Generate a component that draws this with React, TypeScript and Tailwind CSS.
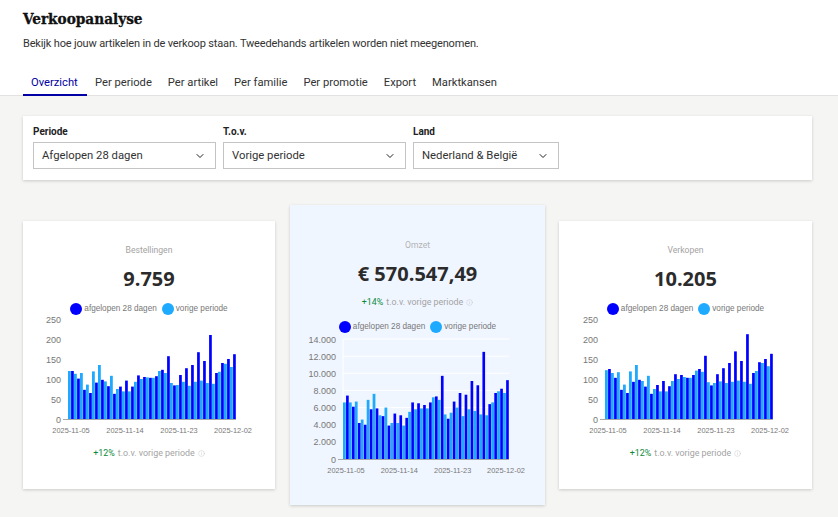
import { ChevronDown, Info } from 'lucide-react';

const tabs = ['Overzicht', 'Per periode', 'Per artikel', 'Per familie', 'Per promotie', 'Export', 'Marktkansen'];

const bestellingen = {
  cur: [120, 101, 73, 65, 91, 98, 82, 63, 81, 96, 81, 109, 105, 103, 107, 123, 157, 84, 110, 127, 135, 167, 145, 210, 115, 140, 150, 162],
  prev: [120, 113, 115, 86, 119, 135, 94, 108, 75, 69, 69, 93, 100, 104, 103, 120, 115, 90, 85, 93, 83, 93, 96, 90, 88, 118, 138, 130],
};
const omzet = {
  cur: [7400, 6100, 4200, 4000, 5800, 5900, 5000, 3900, 5300, 5100, 4800, 6600, 6500, 6300, 6600, 7300, 9700, 4700, 6700, 7700, 7500, 9100, 8600, 12500, 6400, 7700, 8200, 9200],
  prev: [6600, 6600, 6700, 4600, 6900, 7600, 5100, 6000, 4200, 4200, 3900, 5500, 5800, 5900, 5900, 7200, 6900, 5200, 5400, 6000, 5000, 5800, 5600, 5200, 5100, 6600, 7900, 7700],
};
const verkopen = {
  cur: [125, 103, 73, 65, 93, 98, 81, 63, 85, 95, 82, 112, 110, 103, 110, 125, 158, 84, 112, 127, 140, 169, 145, 212, 115, 142, 150, 163],
  prev: [122, 115, 117, 86, 119, 135, 95, 108, 75, 69, 69, 95, 100, 105, 103, 121, 118, 92, 90, 94, 90, 93, 96, 93, 88, 120, 140, 132],
};

const dates = ['2025-11-05', '2025-11-14', '2025-11-23', '2025-12-02'];

type ChartProps = {
  data: { cur: number[]; prev: number[] };
  ticks: { value: number; label: string }[];
  max: number;
  top: number;
  plotLeft: number;
  plotWidth: number;
  width: number;
  plotHeight: number;
  grid?: boolean;
};

function BarChart({ data, ticks, max, top, plotLeft, plotWidth, width, plotHeight, grid }: ChartProps) {
  const base = top + plotHeight;
  const step = plotWidth / 28;
  const y = (v: number) => base - (v / max) * plotHeight;
  return (
    <svg width={width} height={base + 22} className="block" style={{ fontFamily: '"Liberation Sans", Arial, sans-serif' }}>
      {grid &&
        ticks.map((t) => <line key={t.value} x1={plotLeft} x2={plotLeft + plotWidth} y1={y(t.value)} y2={y(t.value)} stroke="#ffffff" />)}
      {grid && <line x1={plotLeft} x2={plotLeft} y1={top} y2={base} stroke="#ffffff" />}
      {ticks.map((t) => (
        <text key={t.value} x={plotLeft - 7} y={y(t.value) + 3.5} textAnchor="end" fontSize="9" fill="#777777">
          {t.label}
        </text>
      ))}
      {data.prev.map((v, i) => (
        <rect key={i} x={plotLeft + i * step} y={y(v)} width={step / 2 - 0.2} height={base - y(v)} fill="#1eaaff" />
      ))}
      {data.cur.map((v, i) => (
        <rect key={i} x={plotLeft + i * step + step / 2 + 0.1} y={y(v)} width={step / 2 - 0.3} height={base - y(v)} fill="#0000ff" />
      ))}
      <line x1={plotLeft - 5} x2={plotLeft + plotWidth} y1={base + 0.5} y2={base + 0.5} stroke="#a8a8a8" />
      {dates.map((d, i) => (
        <text key={d} x={plotLeft + 3 + (i * (plotWidth - 6)) / 3} y={base + 14} textAnchor="middle" fontSize="7.4" fill="#777777">
          {d}
        </text>
      ))}
    </svg>
  );
}

function Legend() {
  return (
    <div className="flex items-center justify-center text-[8.2px] leading-3 text-[#777777] font-['Liberation_Sans',Arial,sans-serif]">
      <span className="h-3 w-3 rounded-full bg-[#0000ff]" />
      <span className="ml-[2px]">afgelopen 28 dagen</span>
      <span className="ml-[5px] h-3 w-3 rounded-full bg-[#1eaaff]" />
      <span className="ml-[2px]">vorige periode</span>
    </div>
  );
}

function Compare({ value }: { value: string }) {
  return (
    <div className="flex items-center justify-center text-[8.9px] leading-4 text-[#a3a3a3]">
      <span className="text-[#0b8a3a]">{value}</span>
      <span className="ml-[3px]">t.o.v. vorige periode</span>
      <Info className="ml-[3px] h-[7px] w-[7px] text-[#c4c4c4]" strokeWidth={1.5} />
    </div>
  );
}

const countTicks = [0, 50, 100, 150, 200, 250].map((v) => ({ value: v, label: String(v) }));
const omzetTicks = [0, 2000, 4000, 6000, 8000, 10000, 12000, 14000].map((v) => ({
  value: v,
  label: v === 0 ? '0' : v.toLocaleString('nl-NL'),
}));

function SelectBox({ label, value, width }: { label: string; value: string; width: string }) {
  return (
    <div className={width}>
      <div className="mb-[3px] pt-[1px] text-[10px] font-bold leading-[14px] text-[#222222]">{label}</div>
      <div className="flex h-[27px] items-center justify-between border border-[#c4c4c4] bg-white pl-2 pr-[9px] text-[11.3px] text-[#333333]">
        <span className="pt-[1px]">{value}</span>
        <ChevronDown className="h-3 w-3 text-[#222222]" strokeWidth={2} />
      </div>
    </div>
  );
}

export default function App() {
  return (
    <div className="h-[517px] w-[838px] overflow-hidden bg-[#f5f5f4] font-['Roboto',Arial,sans-serif]">
      {/* Header */}
      <div className="h-[96px] border-b border-[#e2e2e2] bg-white pl-[23px] pt-[9px]">
        <h1 className="font-['DejaVu_Serif_Condensed','DejaVu_Serif',serif] text-[15.2px] font-bold leading-5 text-[#111111] [-webkit-text-stroke:0.3px_#111111]">
          Verkoopanalyse
        </h1>
        <p className="mt-[7px] text-[11px] leading-4 tracking-[-0.16px] text-[#333333]">
          Bekijk hoe jouw artikelen in de verkoop staan. Tweedehands artikelen worden niet meegenomen.
        </p>
        <div className="mt-[17px] flex">
          {tabs.map((tab, i) => (
            <div
              key={tab}
              className={
                i === 0
                  ? 'h-[27px] w-[64px] border-b-2 border-[#0000a4] px-2 text-[11.2px] leading-[28px] text-[#0000a4]'
                  : 'h-[27px] px-2 text-[11.2px] leading-[28px] text-[#333333]'
              }
            >
              {tab}
            </div>
          ))}
        </div>
      </div>

      <div className="px-[23px] pt-5">
        {/* Filters */}
        <div className="flex h-[64px] w-[789px] gap-[7px] bg-white pl-[10px] pt-[8px] shadow-[0_1px_3px_rgba(0,0,0,0.18)]">
          <SelectBox label="Periode" value="Afgelopen 28 dagen" width="w-[183px]" />
          <SelectBox label="T.o.v." value="Vorige periode" width="w-[183px]" />
          <SelectBox label="Land" value="Nederland & België" width="w-[146px]" />
        </div>

        {/* Stat cards */}
        <div className="mt-[25px] flex items-center gap-[14px]">
          <div className="mr-[1px] h-[268px] w-[252px] bg-white pt-[21px] shadow-[0_1px_3px_rgba(0,0,0,0.18)]">
            <div className="text-center text-[8.6px] leading-4 text-[#a3a3a3]">Bestellingen</div>
            <div className="mt-[7px] text-center font-['Open_Sans',sans-serif] text-[20px] font-bold leading-7 text-[#2b2b2b]">9.759</div>
            <div className="mt-[10px]">
              <Legend />
            </div>
            <BarChart data={bestellingen} ticks={countTicks} max={250} top={4} plotLeft={45} plotWidth={168} width={252} plotHeight={100} />
            <div className="mt-[4px]">
              <Compare value="+12%" />
            </div>
          </div>

          <div className="h-[300px] w-[255px] bg-[#f0f6ff] pt-[32px] shadow-[0_1px_3px_rgba(0,0,0,0.18)]">
            <div className="text-center text-[8.6px] leading-4 text-[#b3b3b3]">Omzet</div>
            <div className="mt-[7px] text-center font-['Open_Sans',sans-serif] text-[20px] font-bold leading-7 text-[#2b2b2b]">€ 570.547,49</div>
            <div className="mt-[6px]">
              <Compare value="+14%" />
            </div>
            <div className="mt-[11px]">
              <Legend />
            </div>
            <BarChart data={omzet} ticks={omzetTicks} max={14000} top={6} plotLeft={53} plotWidth={166} width={255} plotHeight={120} grid />
          </div>

          <div className="h-[268px] w-[253px] bg-white pt-[21px] shadow-[0_1px_3px_rgba(0,0,0,0.18)]">
            <div className="text-center text-[8.6px] leading-4 text-[#a3a3a3]">Verkopen</div>
            <div className="mt-[7px] text-center font-['Open_Sans',sans-serif] text-[20px] font-bold leading-7 text-[#2b2b2b]">10.205</div>
            <div className="mt-[10px]">
              <Legend />
            </div>
            <BarChart data={verkopen} ticks={countTicks} max={250} top={4} plotLeft={46} plotWidth={168} width={253} plotHeight={100} />
            <div className="mt-[4px]">
              <Compare value="+12%" />
            </div>
          </div>
        </div>
      </div>
    </div>
  );
}
